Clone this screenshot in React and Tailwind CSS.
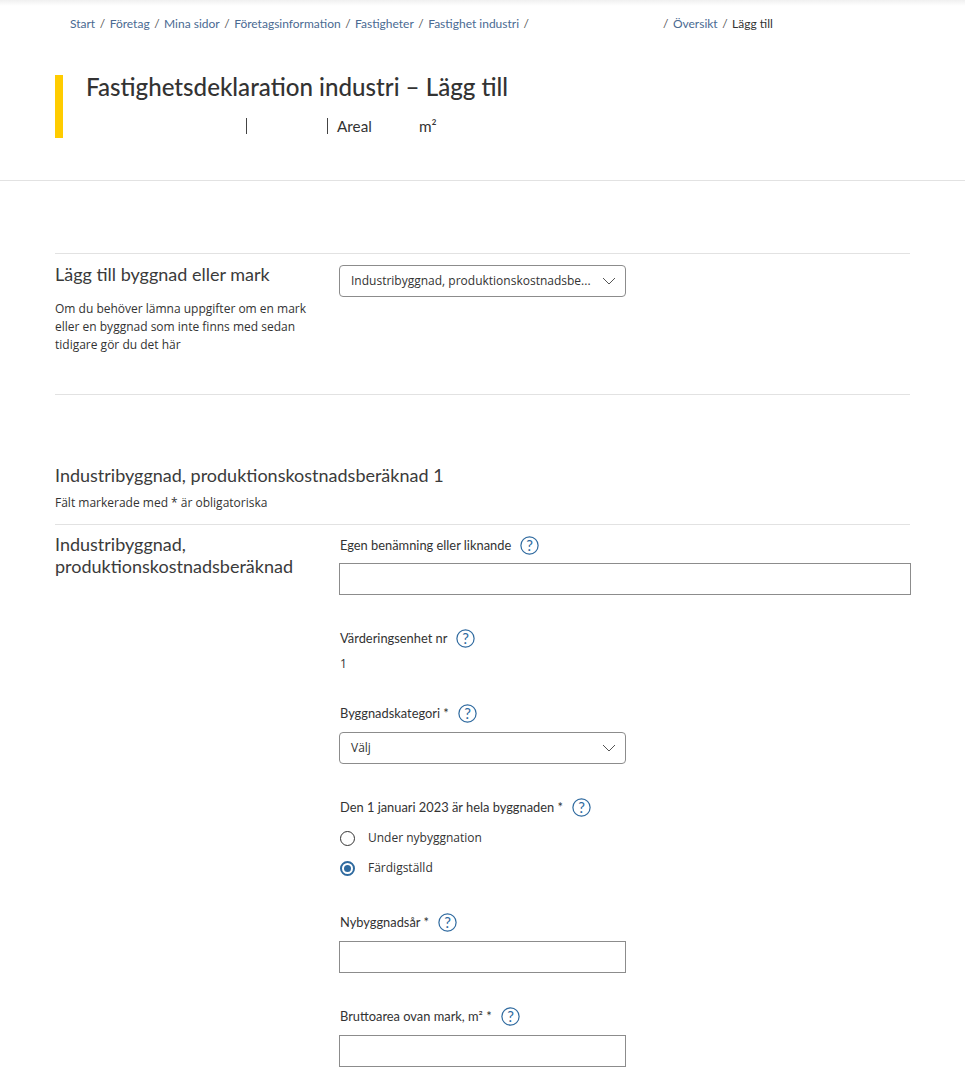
const Help = () => (
  <svg width="19" height="19" viewBox="0 0 19 19" className="shrink-0" fill="none">
    <circle cx="9.5" cy="9.5" r="8.6" stroke="#2f6a9f" strokeWidth="1.2" />
    <text x="9.5" y="14.6" textAnchor="middle" fontSize="15" fill="#2f6a9f" fontFamily="Lato, sans-serif">?</text>
  </svg>
);

const Label = ({ children }) => (
  <div className="flex items-center h-[19px] text-[12.85px] text-[#333] font-['Lato',sans-serif] pl-px">
    <span>{children}</span>
    <span className="ml-[9px]"><Help /></span>
  </div>
);

const Chevron = () => (
  <svg width="14" height="8" viewBox="0 0 14 8" fill="none">
    <path d="M1 1l6 6 6-6" stroke="#555" strokeWidth="1" />
  </svg>
);

const Select = ({ children }) => (
  <div className="flex items-center justify-between w-[287px] h-[32px] border border-[#8c8c8c] rounded-[4px] pl-[11px] pr-[9px] text-[12px] text-[#333] font-['Open_Sans',sans-serif]">
    <span>{children}</span>
    <Chevron />
  </div>
);

const Input = ({ className = "w-[287px]" }) => (
  <div className={`h-[32px] border border-[#8c8c8c] bg-white ${className}`} />
);

const Sep = () => <span className="mx-[4.5px] text-[#555]">/</span>;

const crumbs = ["Start", "Företag", "Mina sidor", "Företagsinformation", "Fastigheter", "Fastighet industri"];

export default function App() {
  return (
    <div className="w-[965px] h-[1086px] overflow-hidden bg-white font-['Lato',sans-serif] text-[#333]">
      <div className="h-[6px] bg-gradient-to-b from-[#f0f0f0] to-white" />
      <nav className="flex items-center h-[14px] mt-[11px] pl-[70px] text-[12px] text-[#4a6a92] whitespace-nowrap">
        {crumbs.map((c) => (
          <span key={c}>{c}<Sep /></span>
        ))}
        <span className="ml-[125px]"><Sep /></span>
        <span>Översikt</span>
        <Sep />
        <span className="text-[#333]">Lägg till</span>
      </nav>

      <header className="flex mt-[44px] ml-[55px] h-[63px] border-l-[8px] border-[#ffcc00] pl-[23px]">
        <div>
          <h1 className="text-[24.15px] leading-[24px] text-[#333] font-medium">Fastighetsdeklaration industri – Lägg till</h1>
          <div className="flex items-center mt-[16px] h-[22px] text-[15.3px]">
            <span className="w-px h-[16px] bg-[#444] ml-[160px]" />
            <span className="w-px h-[16px] bg-[#444] ml-[80px]" />
            <span className="ml-[9px]">Areal</span>
            <span className="ml-[47px]">m²</span>
          </div>
        </div>
      </header>

      <div className="h-px bg-[#e2e2e2] mt-[42px]" />

      <main className="mx-[55px] w-[855px]">
        <section className="mt-[72px] border-t border-b border-[#e2e2e2] h-[142px] flex">
          <div className="w-[284px] shrink-0 pt-[9px]">
            <h2 className="text-[18px] leading-[22px] text-[#3b3b3b]">Lägg till byggnad eller mark</h2>
            <p className="mt-[15px] w-[262px] text-[12px] leading-[18px] font-['Open_Sans',sans-serif] text-[#333]">
              Om du behöver lämna uppgifter om en mark eller en byggnad som inte finns med sedan tidigare gör du det här
            </p>
          </div>
          <div className="pt-[11px]">
            <Select>Industribyggnad, produktionskostnadsbe...</Select>
          </div>
        </section>

        <h2 className="mt-[69px] text-[18px] leading-[22px] text-[#3b3b3b]">Industribyggnad, produktionskostnadsberäknad 1</h2>
        <p className="mt-[9px] text-[12px] leading-[16px] font-['Open_Sans',sans-serif]">Fält markerade med * är obligatoriska</p>

        <section className="mt-[13px] border-t border-[#e2e2e2] flex pt-[8px]">
          <h3 className="w-[284px] shrink-0 text-[18px] leading-[22px] text-[#3b3b3b]">Industribyggnad,<br />produktionskostnadsberäknad</h3>
          <div className="w-[572px] shrink-0 pt-[3px]">
            <Label>Egen benämning eller liknande</Label>
            <div className="mt-[8px]"><Input className="w-[572px]" /></div>

            <div className="mt-[34px]"><Label>Värderingsenhet nr</Label></div>
            <div className="mt-[8px] pl-px text-[12px] leading-[16px] font-['Open_Sans',sans-serif]">1</div>

            <div className="mt-[32px]"><Label>Byggnadskategori *</Label></div>
            <div className="mt-[9px]"><Select>Välj</Select></div>

            <div className="mt-[34px]"><Label>Den 1 januari 2023 är hela byggnaden *</Label></div>
            <div className="mt-[13px] flex items-center h-[16px] text-[12px] font-['Open_Sans',sans-serif]">
              <span className="w-[15px] h-[15px] ml-px rounded-full border border-[#333] bg-white" />
              <span className="ml-[13px]">Under nybyggnation</span>
            </div>
            <div className="mt-[14px] flex items-center h-[16px] text-[12px] font-['Open_Sans',sans-serif]">
              <span className="w-[15px] h-[15px] ml-px rounded-full border-2 border-[#2f6a9f] bg-white flex items-center justify-center">
                <span className="w-[7px] h-[7px] rounded-full bg-[#2f6a9f]" />
              </span>
              <span className="ml-[13px]">Färdigställd</span>
            </div>

            <div className="mt-[37px]"><Label>Nybyggnadsår *</Label></div>
            <div className="mt-[9px]"><Input /></div>

            <div className="mt-[34px]"><Label>Bruttoarea ovan mark, m² *</Label></div>
            <div className="mt-[9px]"><Input /></div>
          </div>
        </section>
      </main>
    </div>
  );
}
